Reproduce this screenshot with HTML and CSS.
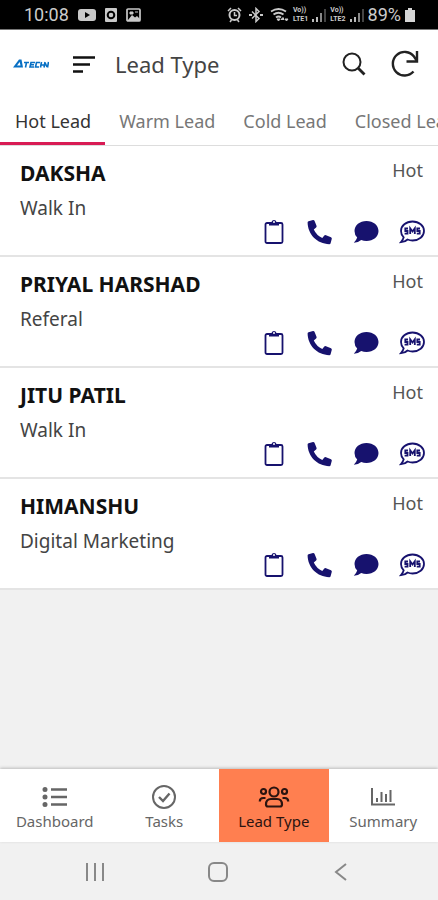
FILE: index.html
```html
<!DOCTYPE html>
<html lang="en">
<head>
<meta charset="utf-8">
<meta name="viewport" content="width=device-width, initial-scale=1">
<title>Lead Type</title>
<link rel="stylesheet" href="styles.css">
</head>
<body>
<svg class="defs" aria-hidden="true">
  <symbol id="clipboard" viewBox="0 0 26 26"><rect x="4.500" y="4" width="17" height="20" rx="1.500" fill="none" stroke="currentColor" stroke-width="1.800"/><path d="M8 3h2.500a2.600 2.600 0 0 1 5 0H18v3.500H8z" fill="currentColor"/><circle cx="13" cy="3" r="1" fill="#fff"/></symbol>
  <symbol id="phone" viewBox="0 0 26 26"><path d="M1.500 2.200 6 1q1-.2 1.500.8l2 5q.4 1-.4 1.700L6.800 10.500q2.800 6 8.500 8.600l2-2.500q.7-.8 1.700-.4l5 2q1 .5.8 1.500l-1.200 4.600q-.3.900-1.300.9C10 25 .8 15.500.6 3.600q0-1.100.9-1.400z" fill="currentColor"/></symbol>
  <symbol id="chat" viewBox="0 0 26 26"><path d="M13.500 2C6.700 2 1.500 6.300 1.500 12q0 4 2.700 6.600Q3.500 21 .8 23.700q4.500 0 7.400-2.700 2.500 1 5.300 1C20.300 22 25.500 17.700 25.500 12S20.300 2 13.500 2z" fill="currentColor"/></symbol>
  <symbol id="sms" viewBox="0 0 26 26"><path d="M13.500 2.500C7 2.500 2 6.600 2 12q0 3.800 2.700 6.300Q4 21 2 23.200q4-.2 6.600-2.700 2.300 1 4.900 1C20 21.500 25 17.400 25 12S20 2.500 13.500 2.500z" fill="none" stroke="currentColor" stroke-width="1.800"/><path d="M9 9.500H6.300V12H8.500v2.700H5.600M11.200 15V9.300l2.300 3.200 2.300-3.200V15M21 9.500h-2.700V12h2.400v2.700h-2.900" fill="none" stroke="currentColor" stroke-width="1.800"/></symbol>
  <symbol id="signal" viewBox="0 0 14 16"><path d="M0 15v-3h2v3zM4 15v-5h2v5z" fill="#bbb"/><path d="M8 15V6h2v9z" fill="#888"/><path d="M12 15V2h2v13z" fill="#444"/></symbol>
</svg>

<div class="status">
  <div class="status-group">
    <span class="clock">10:08</span>
    <svg width="18" height="14" viewBox="0 0 18 14"><rect y="1" width="18" height="12" rx="3" fill="#c9c9c9"/><path d="M7 4v6l5-3z" fill="#000"/></svg>
    <svg width="12" height="14" viewBox="0 0 12 14"><rect width="12" height="14" rx="1" fill="#c9c9c9"/><circle cx="6" cy="7" r="3.300" fill="none" stroke="#000" stroke-width="2"/></svg>
    <svg width="15" height="14" viewBox="0 0 15 14"><rect x="1" y="1" width="13" height="12" rx="1" fill="none" stroke="#c9c9c9" stroke-width="1.700"/><path d="m2 12 4-5 3 2.500L11 8l3 3v2H2z" fill="#c9c9c9"/><path d="M4 4h3v2H4zM9 4h3" fill="#c9c9c9" stroke="#c9c9c9"/></svg>
  </div>
  <div class="status-group status-right">
    <svg width="15" height="16" viewBox="0 0 15 16" fill="none" stroke="#c9c9c9" stroke-width="2"><circle cx="7.500" cy="8" r="5"/><path d="M7.500 5v3.500H10M1 4l3-3M14 4l-3-3M3 15l1.500-2M12 15l-1.500-2" stroke-width="1.500"/></svg>
    <svg width="14" height="16" viewBox="0 0 14 16" fill="none" stroke="#c9c9c9" stroke-width="1.500"><path d="m3 4.500 7 7L7 14.500v-13l3 3-7 7"/><path d="M0 8h3M11 8h3" stroke-width="2"/></svg>
    <svg width="19" height="16" viewBox="0 0 19 16" fill="none" stroke="#c9c9c9" stroke-width="1.800"><path d="M1 4.500q7.500-5 15 0M3.500 7.500q5-3.500 10 0M6 10.500q2.500-2 5 0"/><path d="m8.500 14 1.500-2H7zM11 12.500l2-2 1 2zM15 12l3 0-1.500 2z" fill="#c9c9c9" stroke-width="1"/></svg>
    <span class="volte">Vo))<br>LTE1</span>
    <svg width="14" height="16"><use href="#signal"/></svg>
    <span class="volte">Vo))<br>LTE2</span>
    <svg width="14" height="16"><use href="#signal"/></svg>
    <span class="percent">89%</span>
    <svg width="10" height="14" viewBox="0 0 10 14"><path d="M3 0h4v2h3v12H0V2h3z" fill="#d5d5d5"/></svg>
  </div>
</div>

<header class="appbar">
  <svg class="logo" width="36" height="12" viewBox="0 0 36 12" role="img" aria-label="ATECH"><path fill-rule="evenodd" d="M0 9.500 6 1.500h2.500L10 9.500zM4 7.500h3.500l-.8-3.500z" fill="#0870c4"/><path d="M11 4.500h5M13.500 4.500l-1 5M22 4.500h-4l-1 4.500h4M17.500 6.800h3.500M27 4.500h-3.500L22.500 9H26M28.500 4l-1 5.500M28 7h3M32 4l-1 5.500M32 4.500l2 4.500M35.500 4l-1 5.500" fill="none" stroke="#0870c4" stroke-width="1.600"/></svg>
  <button class="icon-btn" aria-label="Menu"><svg width="22" height="17" viewBox="0 0 22 17"><path d="M0 1.500h22M0 8.500h17M0 15.500h10" stroke="#111" stroke-width="2.400"/></svg></button>
  <h1>Lead Type</h1>
  <button class="icon-btn" aria-label="Search"><svg width="24" height="24" viewBox="0 0 24 24" fill="none" stroke="#222"><circle cx="10" cy="10" r="8.500" stroke-width="2"/><path d="m16 16 6.500 6.500" stroke-width="2.800"/></svg></button>
  <button class="icon-btn" aria-label="Refresh"><svg width="28" height="28" viewBox="0 0 28 28" fill="none" stroke="#222" stroke-width="2.400"><path d="M22.500 21.500A11.800 11.800 0 1 1 23 6.500L26 11"/><path d="M26 1v10.500H15.500"/></svg></button>
</header>

<nav class="tabs" aria-label="Lead status">
  <a class="tab active" href="#hot">Hot Lead</a>
  <a class="tab" href="#warm">Warm Lead</a>
  <a class="tab" href="#cold">Cold Lead</a>
  <a class="tab" href="#closed">Closed Lead</a>
</nav>

<main>
  <article class="lead">
    <div class="lead-top"><h2>DAKSHA</h2><span class="state">Hot</span></div>
    <p>Walk In</p>
    <div class="actions">
      <button aria-label="Notes"><svg><use href="#clipboard"/></svg></button>
      <button aria-label="Call"><svg><use href="#phone"/></svg></button>
      <button aria-label="Chat"><svg><use href="#chat"/></svg></button>
      <button aria-label="SMS"><svg><use href="#sms"/></svg></button>
    </div>
  </article>
  <article class="lead">
    <div class="lead-top"><h2>PRIYAL HARSHAD</h2><span class="state">Hot</span></div>
    <p>Referal</p>
    <div class="actions">
      <button aria-label="Notes"><svg><use href="#clipboard"/></svg></button>
      <button aria-label="Call"><svg><use href="#phone"/></svg></button>
      <button aria-label="Chat"><svg><use href="#chat"/></svg></button>
      <button aria-label="SMS"><svg><use href="#sms"/></svg></button>
    </div>
  </article>
  <article class="lead">
    <div class="lead-top"><h2>JITU PATIL</h2><span class="state">Hot</span></div>
    <p>Walk In</p>
    <div class="actions">
      <button aria-label="Notes"><svg><use href="#clipboard"/></svg></button>
      <button aria-label="Call"><svg><use href="#phone"/></svg></button>
      <button aria-label="Chat"><svg><use href="#chat"/></svg></button>
      <button aria-label="SMS"><svg><use href="#sms"/></svg></button>
    </div>
  </article>
  <article class="lead">
    <div class="lead-top"><h2>HIMANSHU</h2><span class="state">Hot</span></div>
    <p>Digital Marketing</p>
    <div class="actions">
      <button aria-label="Notes"><svg><use href="#clipboard"/></svg></button>
      <button aria-label="Call"><svg><use href="#phone"/></svg></button>
      <button aria-label="Chat"><svg><use href="#chat"/></svg></button>
      <button aria-label="SMS"><svg><use href="#sms"/></svg></button>
    </div>
  </article>
</main>

<nav class="bottom" aria-label="Main">
  <a href="#dashboard"><svg viewBox="0 0 32 26" fill="none" stroke="currentColor"><path d="M12 5.500h16M12 13h16M12 20.500h16" stroke-width="2.600"/><path d="M6 5.500h.01M6 13h.01M6 20.500h.01" stroke-width="5" stroke-linecap="round"/></svg>Dashboard</a>
  <a href="#tasks"><svg viewBox="0 0 32 26" fill="none" stroke="currentColor" stroke-width="2"><circle cx="16" cy="13" r="11"/><path d="m11 13 4 4 6.500-7.500" stroke-width="2.400"/></svg>Tasks</a>
  <a class="active" href="#leads"><svg viewBox="0 0 32 26" fill="none" stroke="currentColor" stroke-width="2.200"><circle cx="16" cy="8" r="4.500"/><circle cx="5.500" cy="7.500" r="2.500"/><circle cx="26.500" cy="7.500" r="2.500"/><path d="M8 20.500q0-5.500 5-5.500h6q5 0 5 5.500 0 2-2 2H10q-2 0-2-2zM1.800 17.500q0-3.500 3.500-3.500h2.200M30.200 17.500q0-3.500-3.500-3.500h-2.200"/></svg>Lead Type</a>
  <a href="#summary"><svg viewBox="0 0 32 26" fill="none" stroke="currentColor" stroke-width="2"><path d="M5 4v16.500h23"/><path d="M10 18v-4M14.500 18V8M19 18v-8M23.500 18V6"/></svg>Summary</a>
</nav>

<div class="system">
  <button aria-label="Recent apps"><svg width="22" height="22" viewBox="0 0 22 22"><path d="M3 2v18M11 2v18M19 2v18" stroke="#888" stroke-width="2"/></svg></button>
  <button aria-label="Home"><svg width="22" height="22" viewBox="0 0 22 22"><rect x="2" y="2" width="18" height="18" rx="5" fill="none" stroke="#888" stroke-width="2"/></svg></button>
  <button aria-label="Back"><svg width="22" height="22" viewBox="0 0 22 22"><path d="m16 3-10 8 10 8" fill="none" stroke="#888" stroke-width="2"/></svg></button>
</div>
</body>
</html>
```
FILE: styles.css
```css
* { box-sizing: border-box; }
body {
  margin: 0;
  min-height: 100vh;
  display: flex;
  flex-direction: column;
  background: #f1f1f1;
  color: #444;
  font-family: "Noto Sans", "Open Sans", sans-serif;
}
button { border: 0; padding: 0; background: none; color: inherit; font: inherit; display: flex; }
a { color: inherit; text-decoration: none; }
svg { display: block; flex: none; }
h1, h2, p { margin: 0; }
.defs { display: none; }

.status {
  display: flex;
  justify-content: space-between;
  align-items: center;
  height: 30px;
  padding: 0 23px 0 24px;
  background: #000;
  border-bottom: 1px solid #777;
  color: #ccc;
  font-family: Roboto, sans-serif;
  font-size: 18px;
}
.status-group { display: flex; align-items: center; gap: 9px; }
.status-right { gap: 4px; }
.status-right svg:nth-child(-n+2) { margin-right: 3px; }
.volte { font-size: 7px; line-height: 9px; font-weight: 700; }

.appbar {
  display: flex;
  align-items: center;
  height: 68px;
  padding: 0 19px 0 13px;
  background: #fff;
}
.appbar h1 { flex: 1; font-size: 22px; font-weight: 400; color: #444; }
.appbar .icon-btn:nth-of-type(1) { margin: 0 20px 0 24px; }
.appbar .icon-btn:nth-of-type(2) { margin-right: 25px; }

.tabs {
  display: flex;
  height: 48px;
  overflow: hidden;
  background: #fff;
  border-bottom: 1px solid #ddd;
  white-space: nowrap;
  font-size: 18px;
  color: #777;
}
.tab { padding: 0 14px; line-height: 46px; flex: none; }
.tab.active { padding-left: 15px; color: #333; border-bottom: 3px solid #d81b54; }

main { flex: 1; }
.lead {
  padding: 12px 13px 10px 20px;
  background: #fff;
  border-bottom: 2px solid #e4e4e4;
}
.lead-top { display: flex; justify-content: space-between; height: 32px; }
.lead h2 { font-size: 21px; line-height: 30px; color: #111; }
.state { padding-right: 2px; font-size: 18px; line-height: 24px; color: #555; }
.lead p { font-size: 19px; line-height: 36px; }
.actions {
  display: flex;
  justify-content: flex-end;
  gap: 20px;
  margin-top: -7px;
  color: #17126e;
}
.actions svg { width: 26px; height: 26px; }

.bottom {
  display: grid;
  grid-template-columns: repeat(4, 1fr);
  background: #fff;
  box-shadow: 0 -1px 3px #bbb;
}
.bottom a {
  display: flex;
  flex-direction: column;
  align-items: center;
  height: 73px;
  padding-top: 15px;
  font-size: 15px;
  line-height: 22px;
  color: #666;
}
.bottom svg { width: 32px; height: 26px; }
.bottom .active { background: #ff7f50; color: #2b1410; }

.system {
  display: flex;
  justify-content: space-between;
  align-items: center;
  height: 58px;
  padding: 2px 86px 0 84px;
}
```
